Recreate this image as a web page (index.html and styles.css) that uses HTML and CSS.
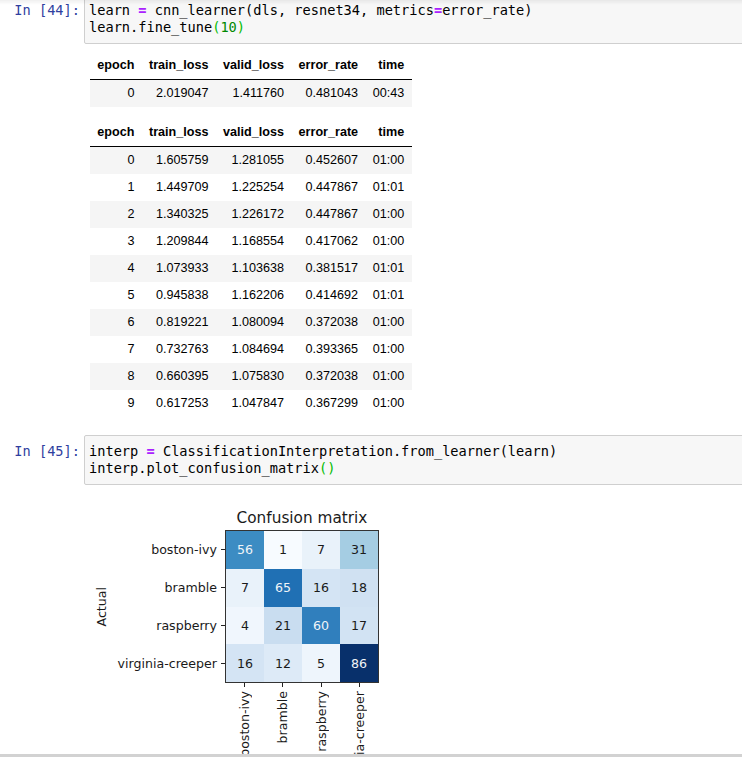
FILE: index.html
```html
<!DOCTYPE html>
<html>
<head>
<meta charset="utf-8">
<link rel="stylesheet" href="styles.css">
</head>
<body>
<div class="notebook">
  <div class="cell cell-first">
    <div class="input">
      <div class="prompt">In&nbsp;[44]:</div>
      <div class="code"><pre>learn <span class="op">=</span> cnn_learner(dls, resnet34, metrics<span class="op">=</span>error_rate)
learn.fine_tune<span class="br">(</span><span class="num">10</span><span class="br">)</span></pre></div>
    </div>
    <div class="output">
      <table class="df">
        <thead><tr><th>epoch</th><th>train_loss</th><th>valid_loss</th><th>error_rate</th><th>time</th></tr></thead>
        <tbody>
          <tr><td>0</td><td>2.019047</td><td>1.411760</td><td>0.481043</td><td>00:43</td></tr>
        </tbody>
      </table>
      <table class="df">
        <thead><tr><th>epoch</th><th>train_loss</th><th>valid_loss</th><th>error_rate</th><th>time</th></tr></thead>
        <tbody>
          <tr><td>0</td><td>1.605759</td><td>1.281055</td><td>0.452607</td><td>01:00</td></tr>
          <tr><td>1</td><td>1.449709</td><td>1.225254</td><td>0.447867</td><td>01:01</td></tr>
          <tr><td>2</td><td>1.340325</td><td>1.226172</td><td>0.447867</td><td>01:00</td></tr>
          <tr><td>3</td><td>1.209844</td><td>1.168554</td><td>0.417062</td><td>01:00</td></tr>
          <tr><td>4</td><td>1.073933</td><td>1.103638</td><td>0.381517</td><td>01:01</td></tr>
          <tr><td>5</td><td>0.945838</td><td>1.162206</td><td>0.414692</td><td>01:01</td></tr>
          <tr><td>6</td><td>0.819221</td><td>1.080094</td><td>0.372038</td><td>01:00</td></tr>
          <tr><td>7</td><td>0.732763</td><td>1.084694</td><td>0.393365</td><td>01:00</td></tr>
          <tr><td>8</td><td>0.660395</td><td>1.075830</td><td>0.372038</td><td>01:00</td></tr>
          <tr><td>9</td><td>0.617253</td><td>1.047847</td><td>0.367299</td><td>01:00</td></tr>
        </tbody>
      </table>
    </div>
  </div>

  <div class="cell cell-second">
    <div class="input">
      <div class="prompt">In&nbsp;[45]:</div>
      <div class="code"><pre>interp <span class="op">=</span> ClassificationInterpretation.from_learner(learn)
interp.plot_confusion_matrix<span class="br">()</span></pre></div>
    </div>
    <div class="figure">
      <div class="fig-title">Confusion matrix</div>
      <div class="ylabel"><span>Actual</span></div>
      <div class="yticks">
        <div class="ytick">boston-ivy</div>
        <div class="ytick">bramble</div>
        <div class="ytick">raspberry</div>
        <div class="ytick">virginia-creeper</div>
      </div>
      <div class="matrix">
        <div class="mcell light" style="background:#3c8cc3">56</div>
        <div class="mcell" style="background:#f7fbff">1</div>
        <div class="mcell" style="background:#e9f2fa">7</div>
        <div class="mcell" style="background:#a5cde3">31</div>
        <div class="mcell" style="background:#e9f2fa">7</div>
        <div class="mcell light" style="background:#2070b4">65</div>
        <div class="mcell" style="background:#d4e4f4">16</div>
        <div class="mcell" style="background:#d0e1f2">18</div>
        <div class="mcell" style="background:#f0f6fd">4</div>
        <div class="mcell" style="background:#c9ddf0">21</div>
        <div class="mcell light" style="background:#307fbd">60</div>
        <div class="mcell" style="background:#d2e3f3">17</div>
        <div class="mcell" style="background:#d4e4f4">16</div>
        <div class="mcell" style="background:#ddeaf7">12</div>
        <div class="mcell" style="background:#eef5fc">5</div>
        <div class="mcell light" style="background:#08306b">86</div>
      </div>
      <div class="xticks">
        <div class="xtick"><span>boston-ivy</span></div>
        <div class="xtick"><span>bramble</span></div>
        <div class="xtick"><span>raspberry</span></div>
        <div class="xtick"><span>virginia-creeper</span></div>
      </div>
    </div>
  </div>
</div>
<div class="top-shadow"></div>
<div class="bottom-bar"></div>
</body>
</html>
```

FILE: styles.css
```css
html, body {
  margin: 0;
  padding: 0;
  overflow: hidden;
  background: #fff;
}

.notebook {
  margin-top: -6px;
}

.input {
  display: flex;
  align-items: flex-start;
}

.prompt {
  width: 84px;
  flex: none;
  box-sizing: border-box;
  padding: 8px 4px 0 0;
  text-align: right;
  font-family: "DejaVu Sans Mono", monospace;
  font-size: 13.65px;
  line-height: 17px;
  color: #303f9f;
  white-space: nowrap;
}

.code {
  flex: 1;
  margin-right: -20px;
  background: #f7f7f7;
  border: 1px solid #cfcfcf;
  border-radius: 2px;
  padding: 7px 4px;
}

.code pre {
  margin: 0;
  font-family: "DejaVu Sans Mono", monospace;
  font-size: 13.65px;
  line-height: 17px;
  color: #000;
}

.op {
  color: #aa22ff;
  font-weight: bold;
}

.num {
  color: #008800;
}

.br {
  color: #00bb00;
}

.output {
  margin-left: 90px;
  padding-top: 8px;
}

.df {
  border-collapse: collapse;
  border: none;
  font-family: "Liberation Sans", Arial, sans-serif;
  font-size: 12.6px;
  color: #000;
  text-align: right;
}

.df + .df {
  margin-top: 12px;
}

.df th,
.df td {
  padding: 6.3px 7.3px;
  line-height: 14.4px;
  border: none;
}

.df th {
  font-weight: bold;
}

.df thead {
  border-bottom: 1px solid #000;
}

.df tbody tr:nth-child(odd) {
  background: #f5f5f5;
}

.cell-second {
  margin-top: 18px;
}

.figure {
  display: grid;
  grid-template-columns: 23px 112px 154px;
  grid-template-rows: auto 153px auto;
  margin: 24px 0 0 90px;
  font-family: "DejaVu Sans", sans-serif;
  font-size: 12.6px;
  color: #1a1a1a;
}

.fig-title {
  grid-column: 3;
  grid-row: 1;
  text-align: center;
  font-size: 15.3px;
  line-height: 18px;
  margin-bottom: 3px;
  white-space: nowrap;
}

.ylabel {
  grid-column: 1;
  grid-row: 2;
  display: flex;
  align-items: center;
  justify-content: center;
}

.ylabel span,
.xtick span {
  writing-mode: vertical-rl;
  transform: rotate(180deg);
  white-space: nowrap;
}

.yticks {
  grid-column: 2;
  grid-row: 2;
  display: grid;
  grid-template-rows: repeat(4, 1fr);
}

.ytick {
  display: flex;
  align-items: center;
  justify-content: flex-end;
  gap: 4px;
  white-space: nowrap;
}

.ytick::after {
  content: "";
  width: 4px;
  height: 1px;
  background: #222;
}

.matrix {
  grid-column: 3;
  grid-row: 2;
  display: grid;
  grid-template-columns: repeat(4, 1fr);
  grid-template-rows: repeat(4, 1fr);
  border: 1px solid #333;
  box-sizing: border-box;
}

.mcell {
  display: flex;
  align-items: center;
  justify-content: center;
  color: #1a1a1a;
}

.mcell.light {
  color: #f0f4f8;
}

.xticks {
  grid-column: 3;
  grid-row: 3;
  display: grid;
  grid-template-columns: repeat(4, 1fr);
}

.xtick {
  display: flex;
  flex-direction: column;
  align-items: center;
}

.xtick::before {
  content: "";
  width: 1px;
  height: 4px;
  background: #222;
  margin-bottom: 4px;
}

.top-shadow {
  position: fixed;
  top: 0;
  left: 0;
  right: 0;
  height: 5px;
  background: linear-gradient(rgba(0, 0, 0, 0.06), rgba(0, 0, 0, 0));
  pointer-events: none;
}

.bottom-bar {
  position: fixed;
  left: 0;
  right: 0;
  bottom: 0;
  height: 3px;
  background: #d2d2d2;
}
```
